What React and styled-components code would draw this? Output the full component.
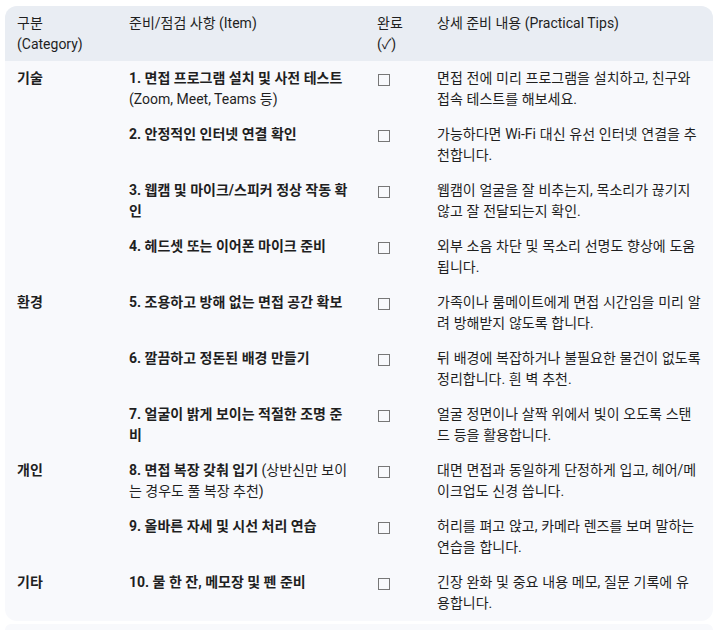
import React from 'react'
import styled, { createGlobalStyle } from 'styled-components'

const Global = createGlobalStyle`
    body{
        margin:0;
        background:#fff;
        font-family: Roboto, "Noto Sans CJK KR", "Noto Sans", sans-serif;
        color:#1f1f1f;
    }
`

const Page = styled.div`
    padding: 6px 7px 0 5px;
`

const Frame = styled.div`
    width:708px;
    border-radius:12px;
    overflow:hidden;
    background:#f8f9fc;
`

const Table = styled.table`
    width:100%;
    border-collapse:collapse;
    table-layout:fixed;
    font-size:14px;
    line-height:21px;
`

const Head = styled.thead`
    background:#e9edf3;
`

const Th = styled.th`
    text-align:left;
    font-weight:400;
    vertical-align:top;
    padding: 7px 12px 6px;
`

const Td = styled.td`
    vertical-align:top;
    padding: 7px 12px;
    font-weight:${p => p.$bold ? 700 : 400};
    word-spacing:${p => p.$tip ? '0.3px' : 'normal'};
`

const Strong = styled.b`
    font-weight:700;
`

const Box = styled.span`
    display:inline-block;
    width:10px;
    height:10px;
    border:1px solid #777;
    margin-top:6px;
    margin-left:1px;
`

const Tail = styled.div`
    width:708px;
    height:8px;
    margin-top:3px;
    background:#f8f9fc;
    border-radius:6px 6px 0 0;
`

const rows = [
  { cat: '기술', item: '1. 면접 프로그램 설치 및 사전 테스트', note: ' (Zoom, Meet, Teams 등)', tip: '면접 전에 미리 프로그램을 설치하고, 친구와 접속 테스트를 해보세요.', br: true },
  { cat: '', item: '2. 안정적인 인터넷 연결 확인', tip: '가능하다면 Wi-Fi 대신 유선 인터넷 연결을 추천합니다.' },
  { cat: '', item: '3. 웹캠 및 마이크/스피커 정상 작동 확인', tip: '웹캠이 얼굴을 잘 비추는지, 목소리가 끊기지 않고 잘 전달되는지 확인.' },
  { cat: '', item: '4. 헤드셋 또는 이어폰 마이크 준비', tip: '외부 소음 차단 및 목소리 선명도 향상에 도움됩니다.' },
  { cat: '환경', item: '5. 조용하고 방해 없는 면접 공간 확보', tip: '가족이나 룸메이트에게 면접 시간임을 미리 알려 방해받지 않도록 합니다.' },
  { cat: '', item: '6. 깔끔하고 정돈된 배경 만들기', tip: '뒤 배경에 복잡하거나 불필요한 물건이 없도록 정리합니다. 흰 벽 추천.' },
  { cat: '', item: '7. 얼굴이 밝게 보이는 적절한 조명 준비', tip: '얼굴 정면이나 살짝 위에서 빛이 오도록 스탠드 등을 활용합니다.' },
  { cat: '개인', item: '8. 면접 복장 갖춰 입기', note: ' (상반신만 보이는 경우도 풀 복장 추천)', tip: '대면 면접과 동일하게 단정하게 입고, 헤어/메이크업도 신경 씁니다.' },
  { cat: '', item: '9. 올바른 자세 및 시선 처리 연습', tip: '허리를 펴고 앉고, 카메라 렌즈를 보며 말하는 연습을 합니다.' },
  { cat: '기타', item: '10. 물 한 잔, 메모장 및 펜 준비', tip: '긴장 완화 및 중요 내용 메모, 질문 기록에 유용합니다.' },
]

const App = () => {
  return (
    <Page>
      <Global />
      <Frame>
        <Table>
          <colgroup>
            <col style={{ width: 112 }} />
            <col style={{ width: 248 }} />
            <col style={{ width: 60 }} />
            <col style={{ width: 288 }} />
          </colgroup>
          <Head>
            <tr>
              <Th>구분 (Category)</Th>
              <Th>준비/점검 사항 (Item)</Th>
              <Th>완료 (✓)</Th>
              <Th>상세 준비 내용 (Practical Tips)</Th>
            </tr>
          </Head>
          <tbody>
            {rows.map((r, i) => (
              <tr key={i}>
                <Td $bold>{r.cat}</Td>
                <Td>
                  <Strong>{r.item}</Strong>
                  {r.br && <br />}
                  {r.note}
                </Td>
                <Td><Box /></Td>
                <Td $tip>{r.tip}</Td>
              </tr>
            ))}
          </tbody>
        </Table>
      </Frame>
      <Tail />
    </Page>
  )
}

export default App
